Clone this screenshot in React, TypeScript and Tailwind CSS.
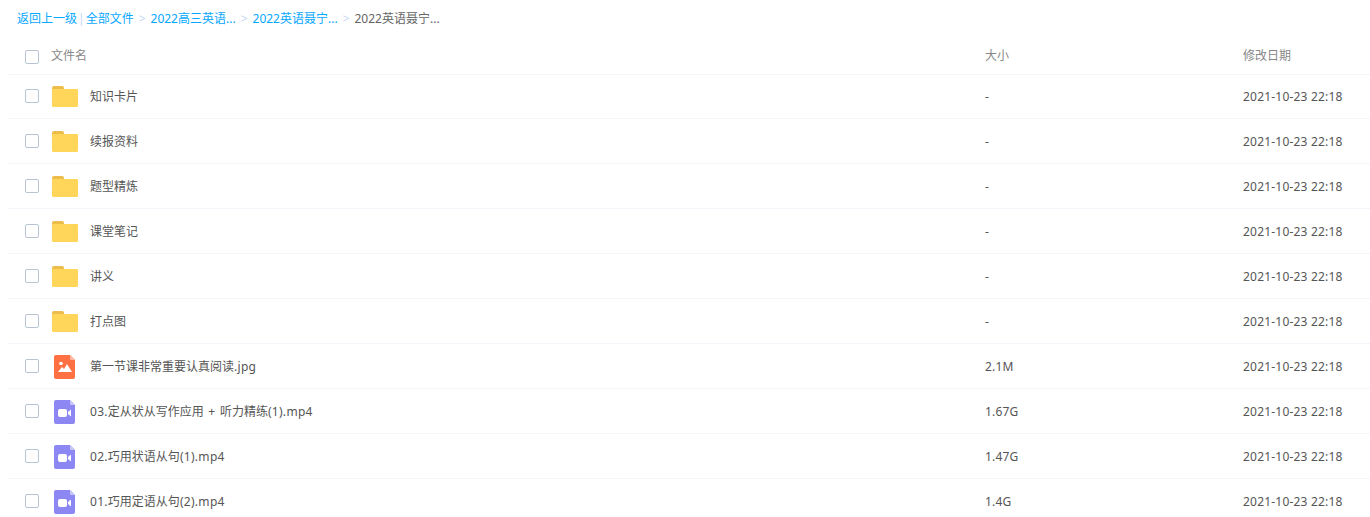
const font = { fontFamily: '"Noto Sans", "Noto Sans CJK SC", sans-serif' };

type Kind = "folder" | "image" | "video";
const rows: { kind: Kind; name: string; size: string }[] = [
  { kind: "folder", name: "知识卡片", size: "-" },
  { kind: "folder", name: "续报资料", size: "-" },
  { kind: "folder", name: "题型精炼", size: "-" },
  { kind: "folder", name: "课堂笔记", size: "-" },
  { kind: "folder", name: "讲义", size: "-" },
  { kind: "folder", name: "打点图", size: "-" },
  { kind: "image", name: "第一节课非常重要认真阅读.jpg", size: "2.1M" },
  { kind: "video", name: "03.定从状从写作应用 + 听力精练(1).mp4", size: "1.67G" },
  { kind: "video", name: "02.巧用状语从句(1).mp4", size: "1.47G" },
  { kind: "video", name: "01.巧用定语从句(2).mp4", size: "1.4G" },
];

function Check() {
  return <span className="block w-[14px] h-[14px] rounded-[2px] border border-[#b8c4d4] bg-white shrink-0" />;
}

function Icon({ kind }: { kind: Kind }) {
  if (kind === "folder")
    return (
      <svg width="26" height="21" viewBox="0 0 26 21" className="block">
        <path d="M0 2a2 2 0 0 1 2-2h8a2 2 0 0 1 2 2v2H0z" fill="#EDBD4B" />
        <path d="M1 3h24a1 1 0 0 1 1 1v15.500a1.500 1.500 0 0 1-1.500 1.500h-23A1.500 1.500 0 0 1 0 19.500V4a1 1 0 0 1 1-1z" fill="#FFD659" />
      </svg>
    );
  const color = kind === "image" ? "#FF7043" : "#8C87F2";
  const fold = kind === "image" ? "#FFB9A3" : "#C9C6FA";
  return (
    <svg width="21" height="24" viewBox="0 0 21 24" className="block">
      <path d="M2 0h14l5 5v17a2 2 0 0 1-2 2H2a2 2 0 0 1-2-2V2a2 2 0 0 1 2-2z" fill={color} />
      <path d="M16 0l5 5h-4a1 1 0 0 1-1-1z" fill={fold} />
      {kind === "image" ? (
        <g fill="#fff">
          <circle cx="7" cy="8.500" r="1.800" />
          <path d="M4 17l4-5 2 2 3-5 5 8z" />
        </g>
      ) : (
        <g fill="#fff">
          <rect x="4" y="9" width="9" height="8" rx="2" />
          <path d="M14 12l3-2.500v7L14 14z" />
        </g>
      )}
    </svg>
  );
}

function Name({ text }: { text: string }) {
  const parts = text.split(/([\u4e00-\u9fff]+)/).filter(Boolean);
  return (
    <>
      {parts.map((p, i) =>
        /[\u4e00-\u9fff]/.test(p) ? (
          <span key={i}>{p}</span>
        ) : (
          <span key={i} className="tracking-[0.3px] [word-spacing:1px]">{p}</span>
        )
      )}
    </>
  );
}

function Row({ kind, name, size, first }: { kind: Kind; name: string; size: string; first: boolean }) {
  return (
    <div className={`flex items-center border-b border-[#f2f6fb] text-[12px] text-[#555] ${first ? "h-[44px] pb-[1px]" : "h-[45px]"}`}>
      <div className="w-[44px] pl-[17px]"><Check /></div>
      <div className={`w-[38px] ${kind === "folder" ? "pt-[1px]" : "pt-[2px] pl-[2px]"}`}><Icon kind={kind} /></div>
      <div className="w-[895px] pt-[2px] whitespace-pre"><Name text={name} /></div>
      <div className="w-[258px] pt-[2px] tracking-[0.2px]">{size}</div>
      <div className="pt-[2px] whitespace-nowrap tracking-[0.2px]">2021-10-23 22:18</div>
    </div>
  );
}

export default function App() {
  return (
    <div className="w-[1370px] h-[517px] overflow-hidden bg-white pl-[8px]" style={font}>
      <div className="flex items-center h-[37px] pl-[9px] text-[12px] whitespace-nowrap text-[#06a7ff]">
        <span>返回上一级</span>
        <span className="text-[#c4d8f4] mx-[1px]">|</span>
        <span>全部文件</span>
        <span className="text-[#c4d8f4] mx-[5px]">&gt;</span>
        <span>2022高三英语...</span>
        <span className="text-[#c4d8f4] mx-[5px]">&gt;</span>
        <span>2022英语聂宁...</span>
        <span className="text-[#c4d8f4] mx-[5px]">&gt;</span>
        <span className="text-[#666]">2022英语聂宁...</span>
      </div>
      <div className="flex items-center h-[38px] border-b border-[#f2f6fb] text-[12px] text-[#888]">
        <div className="w-[43px] pl-[17px] pt-[2px]"><Check /></div>
        <div className="w-[934px]">文件名</div>
        <div className="w-[258px]">大小</div>
        <div>修改日期</div>
      </div>
      {rows.map((r, i) => (
        <Row key={r.name} {...r} first={i === 0} />
      ))}
    </div>
  );
}
